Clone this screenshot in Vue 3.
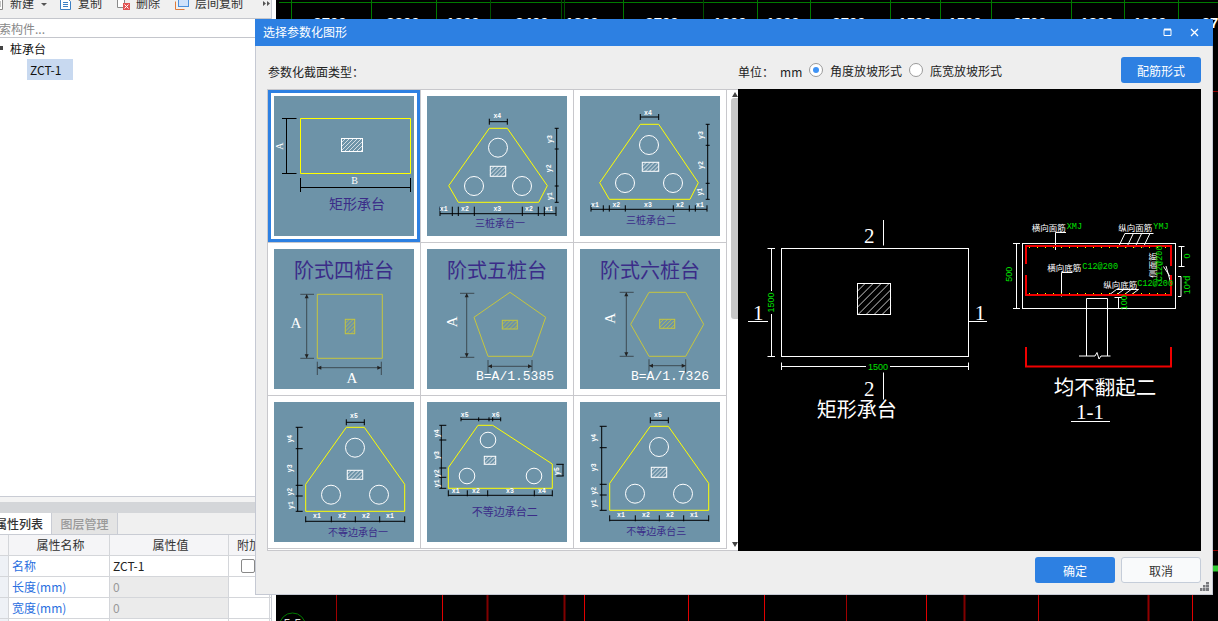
<script setup>
import { ref } from "vue";

const selected = ref(0);
const angleMode = ref(true);

function vdim(x, ys, a = 3, b = 3) {
  const ticks = ys.map((y) => `M${x - a} ${y}H${x + b}`).join("");
  return `M${x} ${ys[0]}V${ys[ys.length - 1]}${ticks}`;
}

function hdim(y, xs, a = 3, b = 3) {
  const ticks = xs.map((x) => `M${x} ${y - a}V${y + b}`).join("");
  return `M${xs[0]} ${y}H${xs[xs.length - 1]}${ticks}`;
}

// 斜线填充，限制在矩形内
function hatch(x, y, w, h, gap) {
  let d = "";
  for (let c = gap; c < w + h; c += gap) {
    const x1 = Math.min(c, w);
    const y1 = c - x1;
    const y2 = Math.min(c, h);
    const x2 = c - y2;
    d += `M${x + x1} ${y + y1}L${x + x2} ${y + y2}`;
  }
  return d;
}

const thumbs = [
  {
    shape: "26.5,22.5 136.5,22.5 136.5,77.5 26.5,77.5",
    color: "#ffff00",
    hatch: [67.5, 42.5, 21, 13],
    circles: [],
    r: 9.5,
    dims: vdim(12.5, [22.5, 77.5], 4.5, 10) + hdim(91.5, [26.5, 136.5], 9.5, 4.5),
    dimColor: "#000",
    xl: [["B", 80.5, 84]],
    yl: [["A", 5, 50]],
    name: "矩形承台",
    nameAt: [83, 107],
    nameSize: 14,
  },
  {
    shape: "62.3,32.3 80.3,32.3 120.3,89.7 111.7,106.3 31.3,106.3 21.7,89.7",
    color: "#ffff00",
    hatch: [63.3, 70.3, 15.4, 10],
    circles: [[71, 51.7], [47, 90], [95, 90]],
    r: 9.5,
    dims:
      hdim(25.7, [62.3, 80.3]) +
      vdim(129.7, [32.3, 53, 90, 106.3], 2, 2) +
      hdim(117.7, [13, 25.3, 31.3, 47.3, 95.3, 111.3, 117.3, 129], 7, 2.3),
    dimColor: "#000",
    xl: [["x4", 70.3, 20.3], ["x1", 16.7, 113], ["x2", 38, 113], ["x3", 70.3, 113], ["x2", 102, 113], ["x1", 122, 113]],
    yl: [["y3", 123, 43], ["y2", 123, 72.3], ["y1", 123, 100]],
    name: "三桩承台一",
    nameAt: [73, 126.5],
    nameSize: 10,
  },
  {
    shape: "60.3,28.3 78.7,28.3 118.3,86.7 110,103.3 29.3,103.3 19.7,86.7",
    color: "#ffff00",
    hatch: [62.3, 66.3, 16.4, 9],
    circles: [[69, 49], [45, 87], [93, 87]],
    r: 9.5,
    dims:
      hdim(21, [60.3, 78.7]) +
      vdim(127.7, [28.3, 49.3, 87.3, 103.3], 2, 2) +
      hdim(113.3, [11, 23.3, 29.3, 45.3, 93.3, 109.3, 115.3, 127], 4, 2.3),
    dimColor: "#000",
    xl: [["x4", 68, 17.3], ["x1", 15, 109.7], ["x2", 36.3, 109.7], ["x3", 68, 109.7], ["x2", 100, 109.7], ["x1", 120, 109.7]],
    yl: [["y3", 121, 39], ["y2", 121, 69], ["y1", 121, 95.7]],
    name: "三桩承台二",
    nameAt: [71, 123.2],
    nameSize: 10,
  },
  {
    shape: "43.3,45.3 108.3,45.3 108.3,109.3 43.3,109.3",
    color: "#c6c63e",
    hatch: [71.3, 70.3, 9.4, 14.4],
    circles: [],
    dims: vdim(32.7, [45.3, 109.3], 6.4, 7.3) + hdim(118.7, [43.3, 107.3], 6, 7.3),
    dimColor: "#3d4a52",
    arrows: [[32.7, 45.3, "d"], [32.7, 109.3, "u"], [43.3, 118.7, "r"], [107.3, 118.7, "l"]],
    big: [["A", 22, 74.3, 0], ["A", 78, 129.3, 0]],
    title: "阶式四桩台",
  },
  {
    shape: "83,43.3 118.7,68.3 105,107.3 61,107.3 47,68.3",
    color: "#c6c63e",
    hatch: [75.3, 71.3, 15, 8.7],
    circles: [],
    dims: vdim(39.7, [44.3, 108.3], 6.7, 7.6) + hdim(117.3, [61, 105], 6.3, 7),
    dimColor: "#3d4a52",
    arrows: [[39.7, 44.3, "d"], [39.7, 108.3, "u"], [61, 117.3, "r"], [105, 117.3, "l"]],
    big: [["A", 25.3, 72.7, -90]],
    title: "阶式五桩台",
    formula: ["B=A/1.5385", 49],
  },
  {
    shape: "69,43.3 105.7,43.3 123.7,75.3 105.7,107.3 69,107.3 50.7,75.3",
    color: "#c6c63e",
    hatch: [79.7, 70.3, 15, 9],
    circles: [],
    dims: vdim(46.3, [43.3, 107.3], 6.6, 7.4) + hdim(116.7, [69, 105.7], 6.4, 7),
    dimColor: "#3d4a52",
    arrows: [[46.3, 43.3, "d"], [46.3, 107.3, "u"], [69, 116.7, "r"], [105.7, 116.7, "l"]],
    big: [["A", 30.3, 69.3, -90]],
    title: "阶式六桩台",
    formula: ["B=A/1.7326", 51],
  },
  {
    shape: "72.3,25.3 90.3,25.3 130.7,82.3 130.7,109.3 31.7,109.3 31.7,82.3",
    color: "#ffff00",
    hatch: [73.3, 68.3, 15.4, 9],
    circles: [[81, 45.7], [57, 92.7], [105, 92.7]],
    r: 9.5,
    dims:
      hdim(20.3, [72.3, 90.3]) +
      vdim(23.7, [25.3, 46.7, 83.3, 94, 109.3], 2, 5) +
      hdim(119.3, [31.7, 57.3, 81.3, 105.7, 130.7], 5, 1),
    dimColor: "#000",
    xl: [["x5", 80, 14.7], ["x1", 43, 114.7], ["x2", 68, 114.7], ["x2", 92, 114.7], ["x1", 116, 114.7]],
    yl: [["y4", 17, 36.7], ["y3", 17, 66.3], ["y2", 17, 89.7], ["y1", 17, 103]],
    name: "不等边承台一",
    nameAt: [84, 129],
    nameSize: 10,
  },
  {
    shape: "51,23.3 65.7,23.3 125.3,62 125.3,86.3 21.3,86.3 21.3,65.7",
    color: "#ffff00",
    hatch: [57.3, 54.3, 11.4, 8],
    circles: [[61, 38], [40, 74], [107, 74]],
    r: 7.8,
    dims:
      hdim(17.3, [34, 51.7, 62, 65.7, 73.7], 2, 2) +
      vdim(14.3, [23.3, 38, 66, 75.3, 86.3], 2, 5) +
      vdim(136, [62.3, 74], 6.7, 0.7) +
      hdim(93.3, [21.3, 40.3, 60.7, 107.3, 125.3], 5, 1),
    dimColor: "#000",
    xl: [["x5", 37.7, 13], ["x6", 68.7, 13], ["x1", 28.7, 89], ["x2", 49, 89], ["x3", 83, 89], ["x4", 115, 89]],
    yl: [["y4", 10.3, 31.3], ["y3", 10.3, 53], ["y2", 10.3, 71.3], ["y1", 10.3, 81.3], ["y5", 130.3, 69]],
    name: "不等边承台二",
    nameAt: [77.7, 109],
    nameSize: 11,
  },
  {
    shape: "70.3,24.3 88.3,24.3 128.7,81.3 128.7,108.3 29.7,108.3 29.7,81.3",
    color: "#ffff00",
    hatch: [71.3, 65.3, 15.4, 10],
    circles: [[79, 45], [55, 91.7], [103, 91.7]],
    r: 9.5,
    dims:
      hdim(18.3, [70.3, 88.3]) +
      vdim(21.7, [24.3, 45.7, 82.3, 93, 108.3], 2, 5) +
      hdim(118.3, [29.7, 55.3, 79.3, 103.7, 128.7], 5, 1),
    dimColor: "#000",
    xl: [["x5", 78, 13.7], ["x1", 41, 113.7], ["x2", 66, 113.7], ["x2", 90, 113.7], ["x1", 114, 113.7]],
    yl: [["y4", 15, 35.7], ["y3", 15, 65.3], ["y2", 15, 88.7], ["y1", 15, 101.3]],
    name: "不等边承台三",
    nameAt: [76.3, 128],
    nameSize: 10,
  },
];

function arrowPoints(a) {
  const [x, y, dir] = a;
  if (dir === "d") return `${x},${y} ${x - 2},${y + 4} ${x + 2},${y + 4}`;
  if (dir === "u") return `${x},${y} ${x - 2},${y - 4} ${x + 2},${y - 4}`;
  if (dir === "r") return `${x},${y} ${x + 4},${y - 2} ${x + 4},${y + 2}`;
  return `${x},${y} ${x - 4},${y - 2} ${x - 4},${y + 2}`;
}

const greenX = [291, 371, 436, 490, 561, 564, 623, 703, 757, 810, 890, 940, 991, 1071, 1124, 1178];
const darkGreen = [490, 561, 564, 703];
const topNums = [
  ["2700", 330], ["3300", 403], ["1800", 463], ["2400", 532], ["1800", 582], ["2700", 662],
  ["1800", 730], ["1800", 783], ["2700", 849], ["1500", 915], ["1500", 965], ["2700", 1030],
  ["1800", 1097], ["1800", 1150], ["27", 1210],
];
const redLines = [
  [336, "#a00000", 1], [442, "#e00000", 1], [487, "#800000", 2], [564, "#800000", 2], [584, "#e00000", 1],
  [688, "#e00000", 1], [764, "#e00000", 1], [846, "#a00000", 1], [926, "#e00000", 1], [964, "#800000", 2],
  [1038, "#c00000", 1], [1148, "#900000", 2], [1192, "#e00000", 1],
];

const props = [
  { name: "名称", value: "ZCT-1", locked: false, check: true },
  { name: "长度(mm)", value: "0", locked: true },
  { name: "宽度(mm)", value: "0", locked: true },
  { name: "", value: "", locked: false },
];

const previewHatch = hatch(119.3, 194.3, 33.4, 31, 8);
const rebarSlants = [380.3, 388.7, 397, 405.3].map((x) => `M${x} 158.3L${x + 6.7} 144.3`).join("");
const bottomSlants = [372, 379.3, 386.7, 394].map((x) => `M${x} 205.3L${x + 6.7} 200.3`).join("");
</script>

<template>
  <div class="app">
    <aside class="side">
      <div class="side-inner">
        <div class="toolbar">
          <div class="tool first">
            <svg width="11" height="12" viewBox="0 0 11 12"><path d="M1.5 .5h8v11h-8zM3 4h5M3 6h5M3 8h5" fill="#fff" stroke="#8a8a8a" /></svg>
            <span>新建</span>
          </div>
          <i class="caret"></i>
          <div class="tool">
            <svg width="12" height="12" viewBox="0 0 12 12"><path d="M.5 .5h7l3 3v8H.5zM3 4.5h5M3 6.5h5M3 8.5h5" fill="#fff" stroke="#3b7fc4" /></svg>
            <span>复制</span>
          </div>
          <div class="tool gap15">
            <svg width="13" height="12" viewBox="0 0 13 12">
              <path d="M.5 .5h7v9H.5z" fill="#fff" stroke="#8a8a8a" />
              <rect x="6" y="5" width="7" height="7" fill="#e25555" />
              <path d="M7.5 6.5l4 4M11.5 6.5l-4 4" stroke="#fff" />
            </svg>
            <span>删除</span>
          </div>
          <div class="tool gap15">
            <svg width="14" height="12" viewBox="0 0 14 12">
              <path d="M.5 3.5v8h9" fill="none" stroke="#e07b3a" />
              <rect x="3.5" y=".5" width="10" height="8" fill="#cfe2fb" stroke="#4a8fdc" />
            </svg>
            <span>层间复制</span>
          </div>
          <svg class="more" width="7" height="5" viewBox="0 0 7 5"><path d="M0 0l3 2.5L0 5zM4 0l3 2.5L4 5z" fill="#555" /></svg>
        </div>

        <div class="search"><span>搜索构件...</span></div>

        <div class="tree">
          <div class="tree-root"><i class="tree-arrow"></i>桩承台</div>
          <div class="tree-node">ZCT-1</div>
        </div>

        <div class="splitter"><div class="splitter-bar"></div></div>

        <div class="tabs">
          <div class="tab active"><span>属性列表</span></div>
          <div class="tab">图层管理</div>
        </div>

        <div class="prop-table">
          <div class="prop-row head">
            <div class="c-idx"></div>
            <div class="c-name">属性名称</div>
            <div class="c-val">属性值</div>
            <div class="c-add">附加</div>
          </div>
          <div v-for="(p, i) in props" :key="i" class="prop-row">
            <div class="c-idx"></div>
            <div class="c-name link">{{ p.name }}</div>
            <div class="c-val" :class="{ locked: p.locked }">{{ p.value }}</div>
            <div class="c-add"><i v-if="p.check" class="check"></i></div>
          </div>
        </div>
      </div>
    </aside>

    <main class="canvas">
      <svg class="canvas-draw" width="942" height="621" viewBox="276 0 942 621">
        <path d="M279 2.5H1218" stroke="#007a00" fill="none" />
        <path
          v-for="x in greenX"
          :key="x"
          :d="`M${x + 0.5} 0V19`"
          :stroke="darkGreen.includes(x) ? '#005000' : '#007a00'"
        />
        <text v-for="n in topNums" :key="n[1]" class="cad-num" :x="n[1]" y="28">{{ n[0] }}</text>
        <path v-for="r in redLines" :key="r[0]" :d="`M${r[0] + 0.5} 594V621`" :stroke="r[1]" :stroke-width="r[2]" />
        <path d="M1213 91.5H1218M1213 550.5H1218" stroke="#900000" />
        <path d="M1213 568.5H1218" stroke="#33cc33" stroke-width="6" />
        <circle cx="292.5" cy="626" r="13" fill="none" stroke="#007a00" />
        <text class="axis-num" x="292.5" y="628">5-5</text>
      </svg>
    </main>

    <section class="dialog">
      <header class="dialog-head">
        <span>选择参数化图形</span>
        <svg class="head-icons" width="40" height="10" viewBox="0 0 40 10">
          <path d="M1 1.5h7v6H1z" fill="none" stroke="#fff" />
          <path d="M1 1.5h7" stroke="#fff" stroke-width="2" />
          <path d="M28 1l7 7M35 1l-7 7" stroke="#fff" stroke-width="1.3" />
        </svg>
      </header>

      <div class="dialog-body">
        <div class="options">
          <div class="options-label">参数化截面类型：</div>
          <span class="unit">单位：</span>
          <span class="mm">mm</span>
          <label class="radio" @click="angleMode = true">
            <i class="dot" :class="{ on: angleMode }"></i>角度放坡形式
          </label>
          <label class="radio" @click="angleMode = false">
            <i class="dot" :class="{ on: !angleMode }"></i>底宽放坡形式
          </label>
          <button class="btn primary push">配筋形式</button>
        </div>

        <div class="work">
          <div class="gallery">
            <div class="grid">
              <div
                v-for="(t, i) in thumbs"
                :key="i"
                class="cell"
                :class="{ sel: selected === i }"
                @click="selected = i"
              >
                <svg class="thumb" width="140" height="140" viewBox="0 0 140 140">
                  <polygon :points="t.shape" fill="none" :stroke="t.color" />
                  <circle v-for="(c, k) in t.circles" :key="k" :cx="c[0]" :cy="c[1]" :r="t.r" fill="none" stroke="#fff" />
                  <rect
                    :x="t.hatch[0]"
                    :y="t.hatch[1]"
                    :width="t.hatch[2]"
                    :height="t.hatch[3]"
                    fill="none"
                    :stroke="t.title ? t.color : '#fff'"
                  />
                  <path
                    :d="hatch(t.hatch[0], t.hatch[1], t.hatch[2], t.hatch[3], 4)"
                    :stroke="t.title ? t.color : '#fff'"
                    stroke-width=".7"
                    fill="none"
                  />
                  <path :d="t.dims" :stroke="t.dimColor" fill="none" />
                  <polygon v-for="(a, k) in t.arrows" :key="k" :points="arrowPoints(a)" fill="#222" />
                  <text
                    v-for="(l, k) in t.xl"
                    :key="k"
                    class="dim-label"
                    :class="{ letter: l[0].length === 1 }"
                    :x="l[1]"
                    :y="l[2]"
                  >{{ l[0] }}</text>
                  <text
                    v-for="(l, k) in t.yl"
                    :key="k"
                    class="dim-label"
                    :class="{ letter: l[0].length === 1 }"
                    :x="l[1]"
                    :y="l[2]"
                    :transform="`rotate(-90 ${l[1]} ${l[2]})`"
                  >{{ l[0] }}</text>
                  <text
                    v-for="(l, k) in t.big"
                    :key="k"
                    class="big-label"
                    :x="l[1]"
                    :y="l[2]"
                    :transform="`rotate(${l[3]} ${l[1]} ${l[2]})`"
                  >{{ l[0] }}</text>
                  <text v-if="t.title" class="thumb-title" x="70" y="20.5">{{ t.title }}</text>
                  <text v-if="t.name" class="thumb-name" :x="t.nameAt[0]" :y="t.nameAt[1]" :font-size="t.nameSize">{{ t.name }}</text>
                  <text v-if="t.formula" class="formula" :x="t.formula[1]" y="127.7">{{ t.formula[0] }}</text>
                </svg>
              </div>
            </div>
            <div class="scroll">
              <i class="arrow up"></i>
              <div class="scroll-thumb"></div>
              <i class="arrow down"></i>
            </div>
          </div>

          <div class="preview">
            <svg width="463" height="462" viewBox="0 0 463 462">
              <g fill="none" stroke="#fff">
                <rect x="43.5" y="159.5" width="187" height="108" />
                <rect x="119.5" y="194.5" width="33" height="31" />
                <path :d="previewHatch" stroke-width=".8" />
                <path d="M33.5 159.5V267.5M29.5 159.5H37M29.5 267.5H37M43.5 277.5H230.5M43.5 273.5V281M230.5 273.5V281" />
                <path d="M145.5 131V156.5M145.5 283.5V310.5M10 232.5H30M230.5 232.5H249" />

                <rect x="284.5" y="154.5" width="153" height="65" />
                <path d="M317.5 161V143.5H328M323.5 207.5V183.5H334.5" />
                <path d="M387 144.5H415.5M378.5 200.5H400.5" />
                <path :d="rebarSlants" />
                <path :d="bottomSlants" />
                <path d="M425.5 177.5L432 187.5M428 177L432.5 193" />
                <path d="M278.5 154.5V219.5M275 154.5H282M275 219.5H282" />
                <path d="M443.5 157.5V177.5M440.5 157.5H446.5M440.5 177.5H446.5" />
                <path d="M440 187.5H443V207.5H440" />
                <path d="M380.5 208.5V219.5M376.5 208.5H384M376.5 219.5H384" />
                <path d="M348.5 267V209.5H369.5V267M341 267H357L359 263.5L361 270L363 267H372.5" />
                <path d="M333 332.5H372" />
              </g>
              <path d="M288 175V157H433V177M288 186V206H433V186" fill="none" stroke="#f00000" stroke-width="2" />
              <path d="M288 258V277.5H433V258" fill="none" stroke="#f00000" stroke-width="2" />
              <path d="M291 158.500H432M291 204.500H432" stroke="#ffff00" stroke-dasharray="1 7" fill="none" />

              <rect x="28" y="202" width="10" height="23" fill="#000" />
              <rect x="128" y="273" width="24" height="9" fill="#000" />
              <text class="cad-green" x="33" y="213.5" transform="rotate(-90 33 213.5)">1500</text>
              <text class="cad-green" x="140" y="278">1500</text>
              <text class="cad-big" x="131.3" y="147">2</text>
              <text class="cad-big" x="131.3" y="300.3">2</text>
              <text class="cad-big" x="20.3" y="223.7">1</text>
              <text class="cad-big" x="242" y="224">1</text>
              <text class="cad-title" x="118.7" y="319.5">矩形承台</text>

              <text class="cad-note" x="293.7" y="138.3">横向面筋</text>
              <text class="cad-tag" x="328.7" y="138.3">XMJ</text>
              <text class="cad-note" x="380.3" y="138.3">纵向面筋</text>
              <text class="cad-tag" x="415.3" y="138.3">YMJ</text>
              <text class="cad-note" x="309.3" y="177.7">横向底筋</text>
              <text class="cad-tag" x="344.3" y="177.7">C12@200</text>
              <text class="cad-note" x="365.3" y="195">纵向底筋</text>
              <text class="cad-tag" x="399.3" y="195">C12@200</text>
              <text class="cad-note side-note" x="413.7" y="176" transform="rotate(-90 413.7 176)">侧面筋</text>
              <text class="cad-tag side-note" x="422" y="174.3" transform="rotate(-90 422 174.3)">C12@200</text>
              <text class="cad-green" x="449.3" y="167" transform="rotate(-90 449.3 167)">0</text>
              <text class="cad-green" x="449.3" y="196" font-size="11" transform="rotate(-90 449.3 196)">10*d</text>
              <text class="cad-green" x="271" y="185.3" transform="rotate(-90 271 185.3)">500</text>
              <text class="cad-green" x="386" y="213.7" transform="rotate(-90 386 213.7)">100</text>
              <text class="cad-title wide" x="367" y="297">均不翻起二</text>
              <text class="cad-big" x="352" y="322.7">1-1</text>
            </svg>
          </div>
        </div>

        <div class="actions">
          <button class="btn primary">确定</button>
          <button class="btn plain">取消</button>
        </div>

        <svg class="grip" width="9" height="9" viewBox="0 0 9 9">
          <path d="M6 0h3v2.500H6zM3 3h2.500v2.500H3zM6 3h3v2.500H6zM0 6h2.500v3H0zM3 6h2.500v3H3zM6 6h3v3H6z" fill="#77787c" />
        </svg>
      </div>
    </section>
  </div>
</template>

<style scoped>
.app {
  position: relative;
  display: flex;
  width: 1218px;
  height: 621px;
  overflow: hidden;
  font-family: "Noto Sans CJK SC", "Noto Sans", sans-serif;
  font-size: 12px;
  color: #222;
}

/* 左侧面板 */
.side {
  width: 276px;
  flex: none;
  background: #fff;
}

.side-inner {
  display: flex;
  flex-direction: column;
  width: 271px;
  height: 621px;
  border-right: 1px solid #c9ccd4;
  overflow: hidden;
}

.toolbar {
  display: flex;
  align-items: flex-end;
  height: 10px;
  padding-bottom: 8px;
  background: #f0f0f0;
  border-bottom: 1px solid #c4c6cc;
  overflow: hidden;
  flex: none;
}

.tool {
  display: flex;
  align-items: flex-end;
  gap: 6px;
  margin-left: 13px;
  line-height: 14px;
  color: #333;
  flex: none;
}

.tool.first {
  margin-left: -7px;
}

.tool.gap15 {
  margin-left: 15px;
}

.caret {
  width: 0;
  height: 0;
  margin: 0 0 4px 7px;
  border-left: 3px solid transparent;
  border-right: 3px solid transparent;
  border-top: 3px solid #555;
  flex: none;
}

.more {
  margin: 0 0 4px 20px;
  flex: none;
}

.search {
  height: 18px;
  line-height: 20px;
  border-bottom: 1px solid #c4c6cc;
  color: #888;
  white-space: nowrap;
  overflow: hidden;
  flex: none;
}

.search span {
  margin-left: -13px;
  display: inline-block;
}

.tree {
  flex: 1;
  border-bottom: 1px solid #c9ccd4;
}

.tree-root {
  display: flex;
  align-items: center;
  height: 21px;
  padding-left: 10px;
  position: relative;
  color: #111;
}

.tree-arrow {
  position: absolute;
  left: 0;
  top: 8px;
  width: 3px;
  height: 4px;
  background: #444;
}

.tree-node {
  width: 46px;
  height: 21px;
  margin-left: 27px;
  padding-left: 3px;
  box-sizing: border-box;
  line-height: 21px;
  background: #c8d9f0;
  color: #111;
}

.splitter {
  height: 16px;
  padding-top: 5px;
  box-sizing: border-box;
  background: #f3f3f3;
  flex: none;
}

.splitter-bar {
  height: 11px;
  background: #d4d6d9;
}

.tabs {
  display: flex;
  height: 21px;
  background: #f0f0f0;
  border-bottom: 1px solid #c9ccd4;
  flex: none;
}

.tab {
  width: 65px;
  line-height: 21px;
  text-align: center;
  background: #e4e4e4;
  border-right: 1px solid #c9ccd4;
  color: #999;
  font-weight: 500;
}

.tab.active {
  width: 51px;
  background: #fff;
  color: #333;
  overflow: hidden;
  white-space: nowrap;
  text-align: left;
}

.tab.active span {
  display: inline-block;
  margin-left: -5px;
}

.prop-table {
  flex: none;
  height: 86px;
  overflow: hidden;
}

.prop-row {
  display: grid;
  grid-template-columns: 9px 101px 119px 41px;
  height: 21px;
  line-height: 20px;
  box-sizing: border-box;
  border-bottom: 1px solid #d4d6da;
}

.prop-row > div {
  border-right: 1px solid #d4d6da;
  white-space: nowrap;
  overflow: hidden;
}

.c-idx {
  background: #eef1f6;
}

.c-name {
  padding-left: 3px;
}

.c-val {
  padding-left: 3px;
}

.c-add {
  position: relative;
}

.head > div {
  background: #f5f5f7;
  text-align: center;
  color: #333;
}

.link {
  color: #2a6fe0;
}

.locked {
  background: #ebebeb;
  color: #999;
}

.check {
  position: absolute;
  left: 12px;
  top: 3px;
  width: 14px;
  height: 14px;
  box-sizing: border-box;
  border: 1px solid #888;
  border-radius: 2px;
  background: #fff;
}

/* CAD 画布 */
.canvas {
  flex: 1;
  position: relative;
  background: #000;
}

.canvas-draw {
  position: absolute;
  left: 0;
  top: 0;
  stroke-width: 1;
}

.cad-num {
  fill: #fff;
  font-family: "Liberation Sans", sans-serif;
  font-size: 15px;
  font-weight: 700;
  text-anchor: middle;
}

.axis-num {
  fill: #ddd;
  font-family: "Liberation Sans", sans-serif;
  font-size: 12px;
  text-anchor: middle;
}

/* 弹窗 */
.dialog {
  position: absolute;
  left: 255px;
  top: 19px;
  display: flex;
  flex-direction: column;
  width: 958px;
  height: 576px;
}

.dialog-head {
  display: flex;
  align-items: center;
  justify-content: space-between;
  height: 27px;
  padding: 0 10px 2px 8px;
  box-sizing: border-box;
  background: #2d80e2;
  color: #fff;
  flex: none;
}

.head-icons {
  margin-top: 3px;
}

.dialog-body {
  position: relative;
  flex: 1;
  padding: 0 11px;
  background: #eee;
  border: 1px solid #c5c9d3;
  border-top: none;
}

.options {
  display: flex;
  align-items: center;
  height: 26px;
  margin: 11px 0 6px;
}

.options-label {
  width: 470px;
  padding: 2px 0 0 1px;
  box-sizing: border-box;
  flex: none;
}

.unit {
  margin: 2px 0 0 1px;
}

.mm {
  margin: 2px 0 0 6px;
  width: 22px;
}

.radio {
  display: flex;
  align-items: center;
  gap: 7px;
  margin-left: 7px;
  color: #222;
  cursor: pointer;
}

.dot {
  position: relative;
  width: 14px;
  height: 14px;
  box-sizing: border-box;
  border: 1px solid #9a9a9a;
  border-radius: 50%;
  background: #fff;
  flex: none;
}

.dot.on::after {
  content: "";
  position: absolute;
  left: 3px;
  top: 3px;
  width: 6px;
  height: 6px;
  border-radius: 50%;
  background: #3f93f5;
}

.btn {
  width: 80px;
  height: 26px;
  padding: 0;
  border-radius: 3px;
  font: inherit;
  cursor: pointer;
  flex: none;
}

.primary {
  border: none;
  background: #2d80e2;
  color: #fff;
}

.plain {
  border: 1px solid #c5cdd9;
  background: #f9fafb;
  color: #333;
}

.push {
  margin-left: auto;
}

.work {
  display: flex;
  height: 462px;
}

.gallery {
  display: flex;
  width: 471px;
  box-sizing: border-box;
  background: #fff;
  border: 1px solid #c8c8cc;
  border-right: none;
  flex: none;
}

.grid {
  display: grid;
  grid-template-columns: repeat(3, 153px);
  grid-auto-rows: 153px;
  flex: none;
}

.cell {
  padding: 6px;
  box-sizing: border-box;
  border-right: 1px solid #c8c8cc;
  border-bottom: 1px solid #c8c8cc;
  cursor: pointer;
}

.cell.sel {
  box-shadow: inset 0 0 0 3px #2d80e2;
}

.thumb {
  display: block;
  background: #6d93a8;
}

.dim-label {
  fill: #fff;
  font-family: "Liberation Mono", monospace;
  font-size: 6.5px;
  font-weight: 700;
  text-anchor: middle;
  dominant-baseline: central;
}

.dim-label.letter {
  font-family: "Liberation Serif", serif;
  font-size: 10px;
  font-weight: 400;
}

.big-label {
  fill: #fff;
  font-family: "Liberation Serif", serif;
  font-size: 15px;
  text-anchor: middle;
  dominant-baseline: central;
}

.thumb-title {
  fill: #3b2c88;
  font-size: 20px;
  text-anchor: middle;
  dominant-baseline: central;
}

.thumb-name {
  fill: #3b2c88;
  text-anchor: middle;
  dominant-baseline: central;
}

.formula {
  fill: #fff;
  font-family: "Liberation Mono", monospace;
  font-size: 13px;
  dominant-baseline: central;
}

.scroll {
  display: flex;
  flex-direction: column;
  align-items: flex-end;
  width: 11px;
  padding: 2px 0 3px;
  box-sizing: border-box;
}

.scroll-thumb {
  width: 7px;
  height: 221px;
  margin-top: 1px;
  background: #c8c8c8;
  border-radius: 3px 0 0 3px;
}

.arrow {
  width: 0;
  height: 0;
  border-left: 3.5px solid transparent;
  border-right: 3.5px solid transparent;
}

.arrow.up {
  border-bottom: 5px solid #444;
}

.arrow.down {
  margin-top: auto;
  border-top: 5px solid #444;
}

.preview {
  width: 463px;
  background: #000;
  flex: none;
}

.preview svg {
  display: block;
}

.cad-big {
  fill: #fff;
  font-family: "Liberation Serif", serif;
  font-size: 21px;
  text-anchor: middle;
  dominant-baseline: central;
}

.cad-title {
  fill: #fff;
  font-size: 20px;
  text-anchor: middle;
  dominant-baseline: central;
}

.cad-title.wide {
  font-size: 20.5px;
}

.cad-green {
  fill: #00e000;
  font-family: "Liberation Sans", sans-serif;
  font-size: 9px;
  text-anchor: middle;
  dominant-baseline: central;
}

.cad-note {
  fill: #fff;
  font-size: 8.5px;
  dominant-baseline: central;
}

.cad-tag {
  fill: #00e000;
  font-family: "Liberation Mono", monospace;
  font-size: 8.5px;
  dominant-baseline: central;
}

.side-note {
  text-anchor: middle;
}

.actions {
  display: flex;
  justify-content: flex-end;
  gap: 6px;
  padding-top: 6px;
}

.grip {
  position: absolute;
  right: 3px;
  bottom: 3px;
}
</style>

<style>
html,
body {
  margin: 0;
  background: #000;
  overflow: hidden;
}
</style>
